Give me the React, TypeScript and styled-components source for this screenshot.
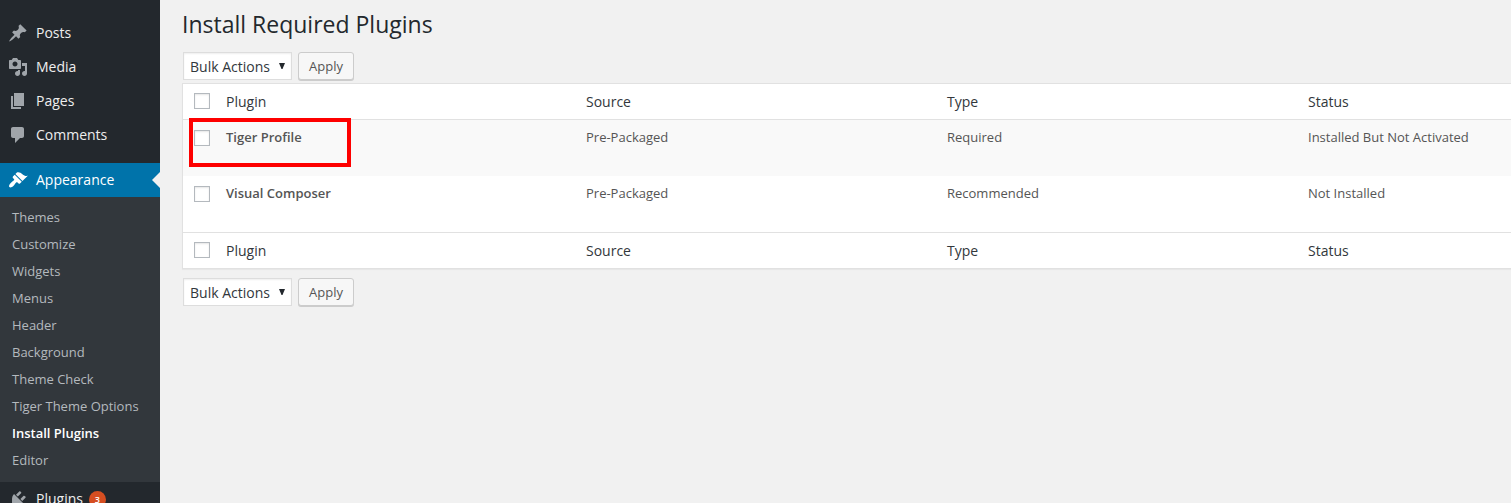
import React from "react";
import styled, { createGlobalStyle } from "styled-components";

const GlobalStyle = createGlobalStyle`
  * { box-sizing: border-box; }
  html, body { margin: 0; height: 100%; overflow: hidden; background: #f1f1f1; }
  body { font-family: "Open Sans", sans-serif; font-size: 13px; color: #555; }
`;

const Page = styled.div`
  display: flex;
  height: 503px;
  overflow: hidden;
`;

const Sidebar = styled.nav`
  flex: 0 0 160px;
  padding-top: 16px;
  background: #23282d;
  overflow: hidden;
`;

const MenuItem = styled.a<{ $active?: boolean }>`
  position: relative;
  display: flex;
  align-items: center;
  height: 34px;
  padding-left: 8px;
  font-size: 14px;
  line-height: 18px;
  color: ${(p) => (p.$active ? "#fff" : "#eee")};
  background: ${(p) => (p.$active ? "#0073aa" : "transparent")};
`;

const MenuIcon = styled.svg<{ $active?: boolean }>`
  width: 20px;
  height: 20px;
  margin-right: 8px;
  fill: ${(p) => (p.$active ? "#fff" : "#a0a5aa")};
  fill-rule: evenodd;
`;

const Arrow = styled.span`
  position: absolute;
  right: 0;
  top: 9px;
  border: 8px solid transparent;
  border-left-width: 0;
  border-right-color: #f1f1f1;
`;

const Separator = styled.div`
  height: 11px;
`;

const Submenu = styled.div`
  padding: 7px 0 8px;
  background: #32373c;
`;

const SubmenuItem = styled.a<{ $current?: boolean }>`
  display: block;
  height: 27px;
  padding-left: 12px;
  line-height: 27px;
  font-weight: ${(p) => (p.$current ? 600 : 400)};
  color: ${(p) => (p.$current ? "#fff" : "#b4b9be")};
`;

const Badge = styled.span`
  width: 17px;
  height: 17px;
  margin: 1px 0 0 6px;
  border-radius: 50%;
  background: #d54e21;
  color: #fff;
  font-size: 9px;
  font-weight: 600;
  line-height: 17px;
  text-align: center;
`;

const Main = styled.main`
  flex: 1;
  min-width: 0;
  padding-left: 22px;
`;

const Title = styled.h1`
  height: 52px;
  margin: 0;
  padding-top: 9px;
  font-size: 23px;
  font-weight: 400;
  line-height: 30px;
  color: #23282d;
`;

const BulkBar = styled.div`
  display: flex;
  gap: 6px;
  height: 31px;
  padding-left: 1px;
`;

const Select = styled.div`
  display: flex;
  align-items: center;
  justify-content: space-between;
  width: 109px;
  height: 28px;
  padding: 0 6px;
  border: 1px solid #ddd;
  background: #fff;
  box-shadow: inset 0 1px 2px rgba(0, 0, 0, 0.07);
  font-size: 14px;
  color: #32373c;
`;

const Caret = styled.svg`
  width: 6px;
  height: 6px;
  fill: #23282d;
`;

const Button = styled.button`
  width: 56px;
  height: 28px;
  padding: 0;
  border: 1px solid #ccc;
  border-radius: 3px;
  background: #f7f7f7;
  box-shadow: 0 1px 0 #ccc;
  font: 13px/26px "Open Sans", sans-serif;
  color: #555;
`;

const Table = styled.section`
  width: 1340px;
  margin-bottom: 9px;
  border: 1px solid #e1e1e1;
  border-right: 0;
  background: #fff;
  box-shadow: 0 1px 1px rgba(0, 0, 0, 0.04);
`;

const Row = styled.div<{ $shaded?: boolean }>`
  position: relative;
  display: grid;
  grid-template-columns: 32px 360px 361px 361px 1fr;
  height: 56px;
  padding: 8px 0 0 11px;
  line-height: 18px;
  background: ${(p) => (p.$shaded ? "#f9f9f9" : "#fff")};
`;

const HeadRow = styled(Row)<{ $foot?: boolean }>`
  height: 36px;
  padding-top: 9px;
  font-size: 14px;
  color: #32373c;
  border-top: ${(p) => (p.$foot ? "1px solid #e1e1e1" : "0")};
  border-bottom: ${(p) => (p.$foot ? "0" : "1px solid #e1e1e1")};
`;

const Checkbox = styled.span`
  width: 16px;
  height: 16px;
  border: 1px solid #b4b9be;
  background: #fff;
  box-shadow: inset 0 1px 2px rgba(0, 0, 0, 0.1);
`;

const RowCheckbox = styled(Checkbox)`
  margin-top: 2px;
`;

const Name = styled.strong`
  font-weight: 600;
`;

const Highlight = styled.span`
  position: absolute;
  left: 6px;
  top: -2px;
  width: 162px;
  height: 49px;
  border: 4px solid #fe0000;
  z-index: 1;
`;

const icons = {
  posts:
    "M10.44 3.02l1.82-1.82 6.36 6.35-1.83 1.82c-1.05-.68-2.48-.57-3.41.36l-.75.75c-.92.93-1.04 2.35-.35 3.41l-1.83 1.82-2.41-2.41-2.8 2.79c-.42.42-3.38 2.71-3.8 2.29s1.86-3.39 2.28-3.81l2.79-2.79L4.1 9.36l1.83-1.82c1.05.69 2.48.57 3.4-.36l.75-.75c.93-.92 1.05-2.35.36-3.41z",
  media:
    "M13 11V4c0-.55-.45-1-1-1h-1.67L9 1H5L3.67 3H2c-.55 0-1 .45-1 1v7c0 .55.45 1 1 1h10c.55 0 1-.45 1-1zM7 4.5c1.38 0 2.5 1.12 2.5 2.5S8.38 9.5 7 9.5 4.5 8.38 4.5 7 5.62 4.5 7 4.5zM14 6h5v10.5c0 1.38-1.12 2.5-2.5 2.5S14 17.88 14 16.5s1.12-2.5 2.5-2.5c.17 0 .34.02.5.05V9h-3V6zm-4 8.05V13h2v3.5c0 1.38-1.12 2.5-2.5 2.5S7 17.88 7 16.5 8.12 14 9.5 14c.17 0 .34.02.5.05z",
  pages: "M6 15V2h10v13H6zm-1 1h8v2H3V5h2v11z",
  comments:
    "M5 2h9c1.1 0 2 .9 2 2v7c0 1.1-.9 2-2 2h-2l-5 5v-5H5c-1.1 0-2-.9-2-2V4c0-1.1.9-2 2-2z",
  appearance:
    "M14.48 11.06L7.41 3.99l1.5-1.5c.5-.56 2.3-.47 3.51.32 1.21.8 1.43 1.28 2.91 2.1 1.18.64 2.45 1.26 4.45.85zm-.71.71L6.7 4.7 4.93 6.47c-.39.39-.39 1.02 0 1.41l1.06 1.06c.39.39.39 1.03 0 1.42-.6.6-1.43 1.11-2.21 1.69-.35.26-.7.53-1.01.84C1.43 14.23.4 16.08 1.4 17.07c.99 1 2.84-.03 4.18-1.36.31-.31.58-.66.85-1.02.57-.78 1.08-1.61 1.69-2.21.39-.39 1.02-.39 1.41 0l1.06 1.06c.39.39 1.02.39 1.41 0z",
  plugins:
    "M13.11 4.36L9.87 7.6 8 5.73l3.24-3.24c.35-.34 1.05-.2 1.56.32.52.51.66 1.21.31 1.55zm-8 1.77l.91-1.12 9.01 9.01-1.19.84c-.71.71-2.63 1.16-3.82 1.16H6.14L4.9 17.26c-.59.59-1.54.59-2.12 0-.59-.58-.59-1.53 0-2.12l1.24-1.24v-3.88c0-1.13.4-3.19 1.09-3.89zm7.26 3.97l3.24-3.24c.34-.35 1.04-.21 1.55.31.52.51.66 1.21.31 1.55l-3.24 3.25z",
};

type IconName = keyof typeof icons;

function Item({
  icon,
  label,
  active,
  count,
}: {
  icon: IconName;
  label: string;
  active?: boolean;
  count?: number;
}) {
  return (
    <MenuItem $active={active}>
      <MenuIcon $active={active} viewBox="0 0 20 20">
        <path d={icons[icon]} />
      </MenuIcon>
      {label}
      {count !== undefined && <Badge>{count}</Badge>}
      {active && <Arrow />}
    </MenuItem>
  );
}

const submenu = [
  "Themes",
  "Customize",
  "Widgets",
  "Menus",
  "Header",
  "Background",
  "Theme Check",
  "Tiger Theme Options",
  "Install Plugins",
  "Editor",
];

const plugins = [
  {
    name: "Tiger Profile",
    source: "Pre-Packaged",
    type: "Required",
    status: "Installed But Not Activated",
    highlighted: true,
  },
  {
    name: "Visual Composer",
    source: "Pre-Packaged",
    type: "Recommended",
    status: "Not Installed",
    highlighted: false,
  },
];

function BulkActions() {
  return (
    <BulkBar>
      <Select>
        Bulk Actions
        <Caret viewBox="0 0 6 6">
          <path d="M0 0h6L3.5 6h-1z" />
        </Caret>
      </Select>
      <Button>Apply</Button>
    </BulkBar>
  );
}

function ColumnTitles({ foot }: { foot?: boolean }) {
  return (
    <HeadRow $foot={foot}>
      <Checkbox />
      <span>Plugin</span>
      <span>Source</span>
      <span>Type</span>
      <span>Status</span>
    </HeadRow>
  );
}

export default function App() {
  return (
    <>
      <GlobalStyle />
      <Page>
        <Sidebar>
          <Item icon="posts" label="Posts" />
          <Item icon="media" label="Media" />
          <Item icon="pages" label="Pages" />
          <Item icon="comments" label="Comments" />
          <Separator />
          <Item icon="appearance" label="Appearance" active />
          <Submenu>
            {submenu.map((label) => (
              <SubmenuItem key={label} $current={label === "Install Plugins"}>
                {label}
              </SubmenuItem>
            ))}
          </Submenu>
          <Item icon="plugins" label="Plugins" count={3} />
        </Sidebar>
        <Main>
          <Title>Install Required Plugins</Title>
          <BulkActions />
          <Table>
            <ColumnTitles />
            {plugins.map((p, i) => (
              <Row key={p.name} $shaded={i % 2 === 0}>
                <RowCheckbox />
                <Name>{p.name}</Name>
                <span>{p.source}</span>
                <span>{p.type}</span>
                <span>{p.status}</span>
                {p.highlighted && <Highlight />}
              </Row>
            ))}
            <ColumnTitles foot />
          </Table>
          <BulkActions />
        </Main>
      </Page>
    </>
  );
}
